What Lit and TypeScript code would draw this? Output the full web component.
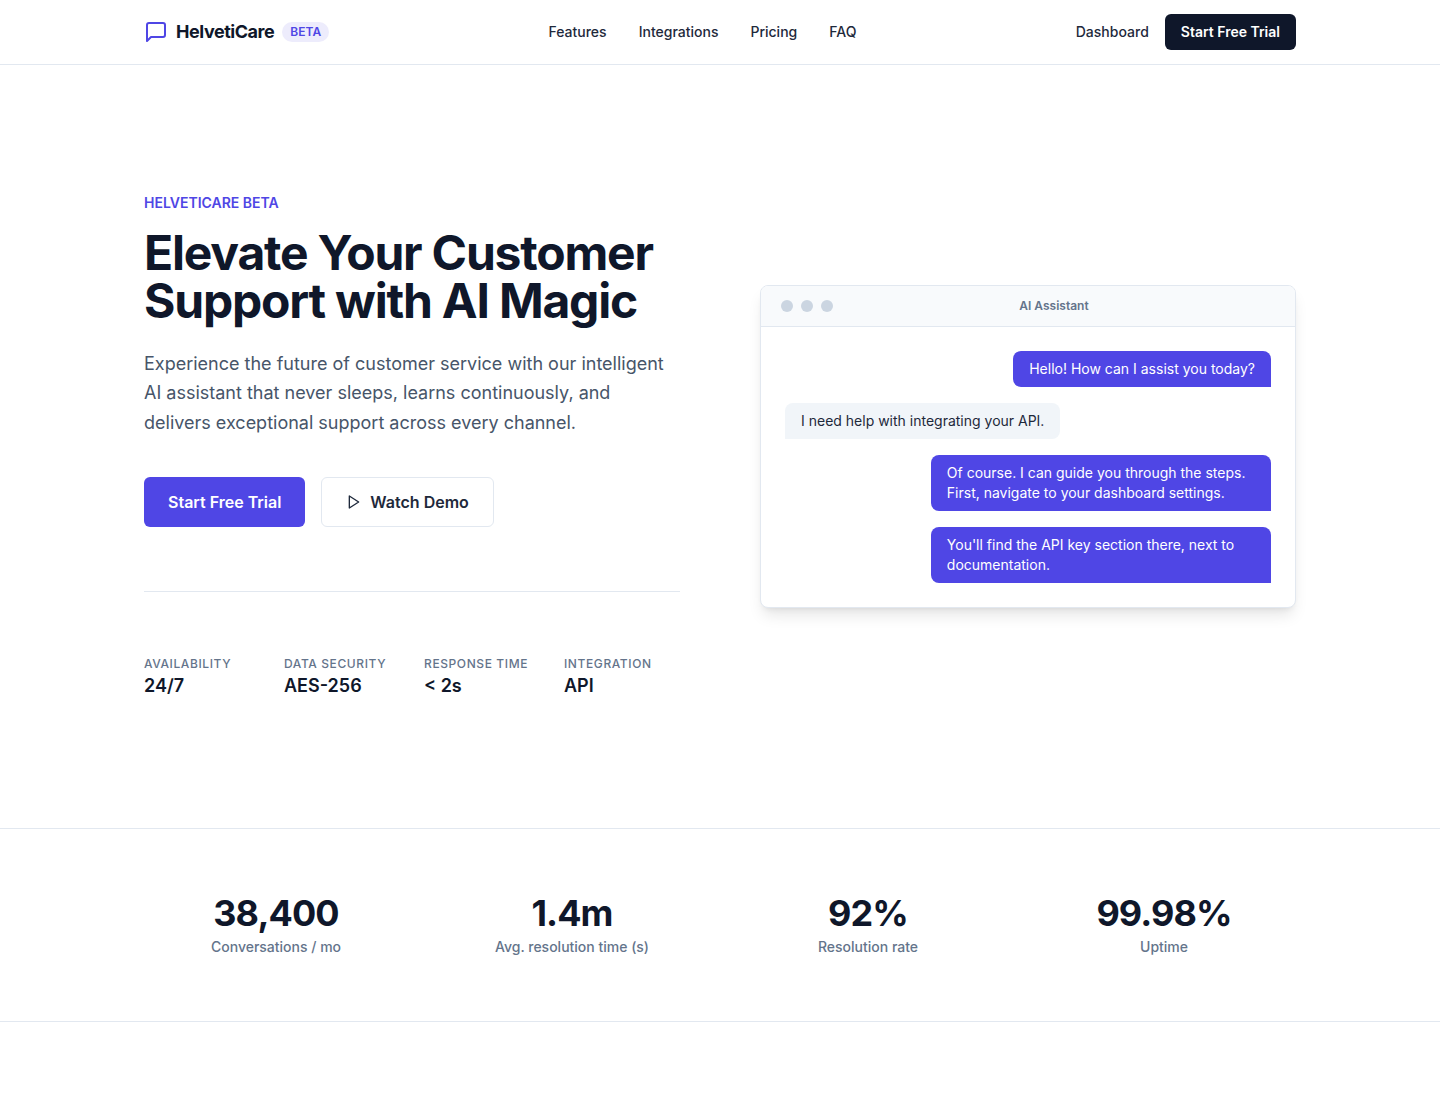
import { LitElement, html, css } from "lit";
import { customElement } from "lit/decorators.js";
import { classMap } from "lit/directives/class-map.js";

const navLinks = ["Features", "Integrations", "Pricing", "FAQ"];

const highlights = [
  { label: "Availability", value: "24/7" },
  { label: "Data Security", value: "AES-256" },
  { label: "Response Time", value: "< 2s" },
  { label: "Integration", value: "API" },
];

const messages = [
  { own: true, text: "Hello! How can I assist you today?" },
  { own: false, text: "I need help with integrating your API." },
  { own: true, text: "Of course. I can guide you through the steps. First, navigate to your dashboard settings." },
  { own: true, text: "You'll find the API key section there, next to documentation." },
];

const stats = [
  { value: "38,400", label: "Conversations / mo" },
  { value: "1.4m", label: "Avg. resolution time (s)" },
  { value: "92%", label: "Resolution rate" },
  { value: "99.98%", label: "Uptime" },
];

@customElement("chat-preview")
export class ChatPreview extends LitElement {
  static styles = css`
    :host {
      display: block;
    }
    .window {
      overflow: hidden;
      border: 1px solid #e2e8f0;
      border-radius: 8px;
      background: #fff;
      box-shadow: 0 10px 15px -3px rgb(0 0 0 / 0.1), 0 4px 6px -4px rgb(0 0 0 / 0.1);
    }
    .bar {
      display: flex;
      align-items: center;
      padding: 12px 20px;
      border-bottom: 1px solid #e2e8f0;
      background: #f8fafc;
    }
    .dots {
      display: flex;
      gap: 8px;
    }
    .dot {
      width: 12px;
      height: 12px;
      border-radius: 50%;
      background: #cbd5e1;
    }
    .title {
      flex: 1;
      margin: 0;
      text-align: center;
      font-size: 12px;
      line-height: 16px;
      font-weight: 600;
      color: #64748b;
    }
    .messages {
      display: flex;
      flex-direction: column;
      align-items: flex-start;
      gap: 16px;
      margin: 0;
      padding: 24px;
      list-style: none;
    }
    .message {
      box-sizing: border-box;
      max-width: 70%;
      padding: 8px 16px;
      border-radius: 8px 8px 8px 0;
      background: #f1f5f9;
      color: #1e293b;
      font-size: 14px;
      line-height: 20px;
    }
    .message.own {
      align-self: flex-end;
      border-radius: 8px 8px 0 8px;
      background: #4f46e5;
      color: #fff;
    }
  `;

  render() {
    return html`
      <section class="window">
        <div class="bar">
          <div class="dots">
            <span class="dot"></span><span class="dot"></span><span class="dot"></span>
          </div>
          <h2 class="title">AI Assistant</h2>
        </div>
        <ul class="messages">
          ${messages.map((m) => html`<li class=${classMap({ message: true, own: m.own })}>${m.text}</li>`)}
        </ul>
      </section>
    `;
  }
}

@customElement("app-root")
export class AppRoot extends LitElement {
  static styles = css`
    :host {
      display: block;
      min-height: 100vh;
      background: #fff;
      color: #0f172a;
      font-family: Inter, "Liberation Sans", sans-serif;
      font-size: 16px;
      line-height: 24px;
      -webkit-font-smoothing: antialiased;
    }
    * {
      box-sizing: border-box;
    }
    h1,
    p,
    dl,
    dd {
      margin: 0;
    }
    a {
      color: inherit;
      text-decoration: none;
    }
    button {
      font: inherit;
      cursor: pointer;
    }
    .container {
      max-width: 1200px;
      margin: 0 auto;
      padding: 0 24px;
    }
    .header {
      border-bottom: 1px solid #e2e8f0;
    }
    .header-row {
      display: flex;
      align-items: center;
      justify-content: space-between;
      height: 64px;
    }
    .brand {
      display: flex;
      align-items: center;
      gap: 8px;
    }
    .brand-name {
      font-size: 18px;
      line-height: 28px;
      font-weight: 700;
      letter-spacing: -0.025em;
    }
    .badge {
      padding: 2px 8px;
      border-radius: 10px;
      background: #edecfc;
      color: #4f46e5;
      font-size: 12px;
      line-height: 16px;
      font-weight: 600;
    }
    .nav,
    .actions {
      display: flex;
      align-items: center;
      font-size: 14px;
      line-height: 20px;
      font-weight: 500;
      color: #1e293b;
    }
    .nav {
      gap: 32px;
    }
    .actions {
      gap: 16px;
    }
    .trial {
      padding: 8px 16px;
      border: 0;
      border-radius: 6px;
      background: #0f172a;
      color: #fff;
      font-weight: 600;
    }
    .hero {
      display: grid;
      grid-template-columns: 1fr 1fr;
      align-items: center;
      gap: 80px;
      padding-top: 128px;
      padding-bottom: 128px;
    }
    .eyebrow {
      font-size: 14px;
      line-height: 20px;
      font-weight: 600;
      color: #4f46e5;
      text-transform: uppercase;
    }
    .headline {
      margin-top: 16px;
      font-size: 48px;
      line-height: 48px;
      font-weight: 700;
      letter-spacing: -0.025em;
    }
    .lead {
      margin-top: 24px;
      font-size: 18px;
      line-height: 1.625;
      color: #475569;
    }
    .cta {
      display: flex;
      gap: 16px;
      margin-top: 40px;
    }
    .button {
      display: flex;
      align-items: center;
      gap: 8px;
      padding: 12px 24px;
      border: 1px solid #e2e8f0;
      border-radius: 6px;
      background: #fff;
      color: #1e293b;
      font-weight: 600;
    }
    .button.primary {
      padding: 13px 24px;
      border: 0;
      background: #4f46e5;
      color: #fff;
    }
    .highlights {
      display: grid;
      grid-template-columns: repeat(4, 1fr);
      gap: 24px;
      margin-top: 64px;
      padding-top: 64px;
      border-top: 1px solid #e2e8f0;
    }
    .highlight-label {
      font-size: 12px;
      line-height: 16px;
      font-weight: 500;
      letter-spacing: 0.05em;
      white-space: nowrap;
      text-transform: uppercase;
      color: #64748b;
    }
    .highlight-value {
      font-size: 18px;
      line-height: 28px;
      font-weight: 600;
    }
    .stats {
      border-top: 1px solid #e2e8f0;
      border-bottom: 1px solid #e2e8f0;
    }
    .stats-row {
      display: grid;
      grid-template-columns: repeat(4, 1fr);
      gap: 32px;
      padding-top: 64px;
      padding-bottom: 64px;
      text-align: center;
    }
    .stat {
      display: flex;
      flex-direction: column-reverse;
      gap: 4px;
    }
    .stat-value {
      font-size: 36px;
      line-height: 40px;
      font-weight: 700;
      letter-spacing: -0.025em;
    }
    .stat-label {
      font-size: 14px;
      line-height: 20px;
      font-weight: 500;
      color: #64748b;
    }
  `;

  render() {
    return html`
      <header class="header">
        <div class="container header-row">
          <a class="brand" href="#">
            <svg width="24" height="24" viewBox="0 0 24 24" fill="none" stroke="#4f46e5" stroke-width="2" stroke-linecap="round" stroke-linejoin="round" aria-hidden="true">
              <path d="M21 15a2 2 0 0 1-2 2H7l-4 4V5a2 2 0 0 1 2-2h14a2 2 0 0 1 2 2z" />
            </svg>
            <span class="brand-name">HelvetiCare</span>
            <span class="badge">BETA</span>
          </a>
          <nav class="nav">
            ${navLinks.map((l) => html`<a href="#${l.toLowerCase()}">${l}</a>`)}
          </nav>
          <div class="actions">
            <a href="#dashboard">Dashboard</a>
            <button class="trial" type="button">Start Free Trial</button>
          </div>
        </div>
      </header>
      <main>
        <section class="container hero">
          <div>
            <p class="eyebrow">HelvetiCare Beta</p>
            <h1 class="headline">Elevate Your Customer Support with AI Magic</h1>
            <p class="lead">
              Experience the future of customer service with our intelligent AI assistant that never
              sleeps, learns continuously, and delivers exceptional support across every channel.
            </p>
            <div class="cta">
              <button class="button primary" type="button">Start Free Trial</button>
              <button class="button" type="button">
                <svg width="16" height="16" viewBox="0 0 24 24" fill="none" stroke="currentColor" stroke-width="2" stroke-linecap="round" stroke-linejoin="round" aria-hidden="true">
                  <path d="M5 3l14 9-14 9V3z" />
                </svg>
                Watch Demo
              </button>
            </div>
            <dl class="highlights">
              ${highlights.map(
                (h) => html`<div>
                  <dt class="highlight-label">${h.label}</dt>
                  <dd class="highlight-value">${h.value}</dd>
                </div>`,
              )}
            </dl>
          </div>
          <chat-preview></chat-preview>
        </section>
        <section class="stats">
          <dl class="container stats-row">
            ${stats.map(
              (s) => html`<div class="stat">
                <dt class="stat-label">${s.label}</dt>
                <dd class="stat-value">${s.value}</dd>
              </div>`,
            )}
          </dl>
        </section>
      </main>
    `;
  }
}
